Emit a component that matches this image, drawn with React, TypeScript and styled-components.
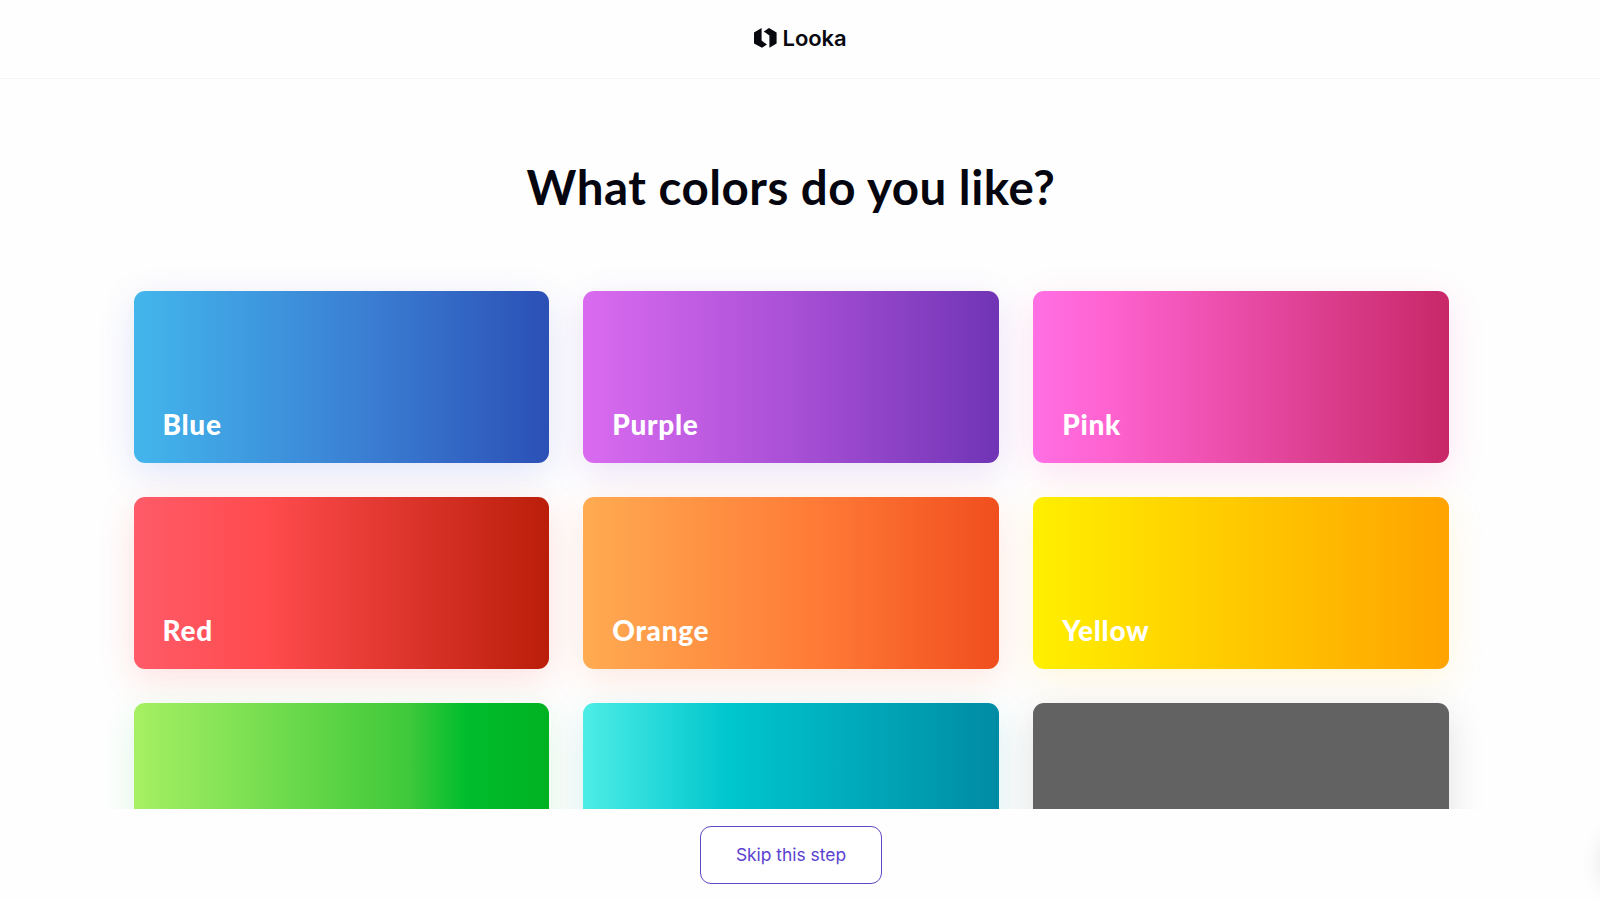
import React from 'react'
import styled, { createGlobalStyle } from 'styled-components'

const GlobalStyle = createGlobalStyle`
  * {
    box-sizing: border-box;
  }

  body {
    margin: 0;
    background-color: #fefefe;
    font-family: Lato, 'Liberation Sans', sans-serif;
  }
`

const Page = styled.div`
  position: relative;
  display: flex;
  flex-direction: column;
  height: 100vh;
  overflow: hidden;
`

const Header = styled.header`
  display: flex;
  flex: none;
  align-items: center;
  justify-content: center;
  gap: 6px;
  height: 79px;
  padding: 0 0 3px 0;
  border-bottom: 1px solid #f4f4f5;
`

const LogoName = styled.span`
  color: #08080f;
  font-family: Inter, sans-serif;
  font-size: 22px;
  font-weight: 600;
  letter-spacing: -0.1px;
  line-height: 26px;
`

const Content = styled.main`
  flex: 1;
  min-height: 0;
  padding: 80px 151.5px 0 133.5px;
  overflow: hidden;
`

const Title = styled.h1`
  margin: 0 0 76px;
  color: #05050f;
  font-size: 47.5px;
  font-weight: 700;
  letter-spacing: 0.5px;
  line-height: 56px;
  text-align: center;
`

const Grid = styled.div`
  display: grid;
  grid-template-columns: repeat(3, 1fr);
  grid-auto-rows: 172px;
  gap: 34px 34.5px;
`

const Card = styled.div<{ $gradient: string; $shadow: string }>`
  display: flex;
  align-items: flex-end;
  padding: 0 29px 22px;
  border-radius: 11px;
  background: ${props => props.$gradient};
  box-shadow: 0 10px 36px rgba(${props => props.$shadow}, 0.15);
`

const CardName = styled.span`
  color: #fff;
  font-size: 28px;
  font-weight: 900;
  letter-spacing: 0.7px;
  line-height: 34px;
`

const Footer = styled.footer`
  display: flex;
  flex: none;
  align-items: flex-start;
  justify-content: center;
  height: 91.5px;
  padding: 17px 18px 0 0;
  background-color: #fefefe;
`

const SkipButton = styled.button`
  width: 182px;
  height: 58.5px;
  padding: 0;
  border: 1px solid #6247c4;
  border-radius: 11px;
  background-color: #fff;
  color: #5a3fd0;
  font-family: Inter, sans-serif;
  font-size: 17.4px;
  font-weight: 400;
`

const Launcher = styled.div`
  position: absolute;
  top: 832px;
  left: 1602px;
  width: 60px;
  height: 60px;
  border-radius: 50%;
  box-shadow: 0 0 24px rgba(0, 0, 0, 0.12);
`

type ColorOption = {
  name?: string
  shadow: string
  gradient: string
}

const colors: ColorOption[] = [
  { name: 'Blue', shadow: '60, 80, 220', gradient: 'linear-gradient(90deg, #43b6ec, #3a7dd2 57%, #2b50b6)' },
  { name: 'Purple', shadow: '130, 60, 200', gradient: 'linear-gradient(90deg, #da6bf0, #a950d6 50%, #7034b5)' },
  { name: 'Pink', shadow: '245, 70, 170', gradient: 'linear-gradient(90deg, #ff6fe4, #ff64d2 16%, #c82868)' },
  { name: 'Red', shadow: '250, 60, 50', gradient: 'linear-gradient(90deg, #ff5b69, #ff4b4d 32%, #ba1e0a)' },
  { name: 'Orange', shadow: '255, 110, 50', gradient: 'linear-gradient(90deg, #ffab52, #ff7a36 57%, #f04e1e)' },
  { name: 'Yellow', shadow: '255, 200, 30', gradient: 'linear-gradient(90deg, #fff000, #ffd300 36%, #ffa300)' },
  { shadow: '40, 200, 90', gradient: 'linear-gradient(90deg, #a7f063, #3fc93a 66%, #00bd2d 80%, #00b222)' },
  { shadow: '0, 160, 170', gradient: 'linear-gradient(90deg, #4dede6, #00c6cd 35%, #008ba4)' },
  { shadow: '60, 60, 60', gradient: '#626262' },
]

function LogoMark() {
  return (
    <svg width="23" height="20" viewBox="0 0 23 20" fill="#08080f">
      <path d="M7.6 0v12.6l5.4 4-5 3.2L0 15.4V4.4z" />
      <path d="M15 0l7.6 4.4v11L15.4 19.8V7.4L9.8 3.4z" />
    </svg>
  )
}

function App() {
  return (
    <Page>
      <GlobalStyle />
      <Header>
        <LogoMark />
        <LogoName>Looka</LogoName>
      </Header>
      <Content>
        <Title>What colors do you like?</Title>
        <Grid>
          {colors.map(color => (
            <Card key={color.gradient} $gradient={color.gradient} $shadow={color.shadow}>
              {color.name && <CardName>{color.name}</CardName>}
            </Card>
          ))}
        </Grid>
      </Content>
      <Footer>
        <SkipButton>Skip this step</SkipButton>
      </Footer>
      <Launcher />
    </Page>
  )
}

export default App
